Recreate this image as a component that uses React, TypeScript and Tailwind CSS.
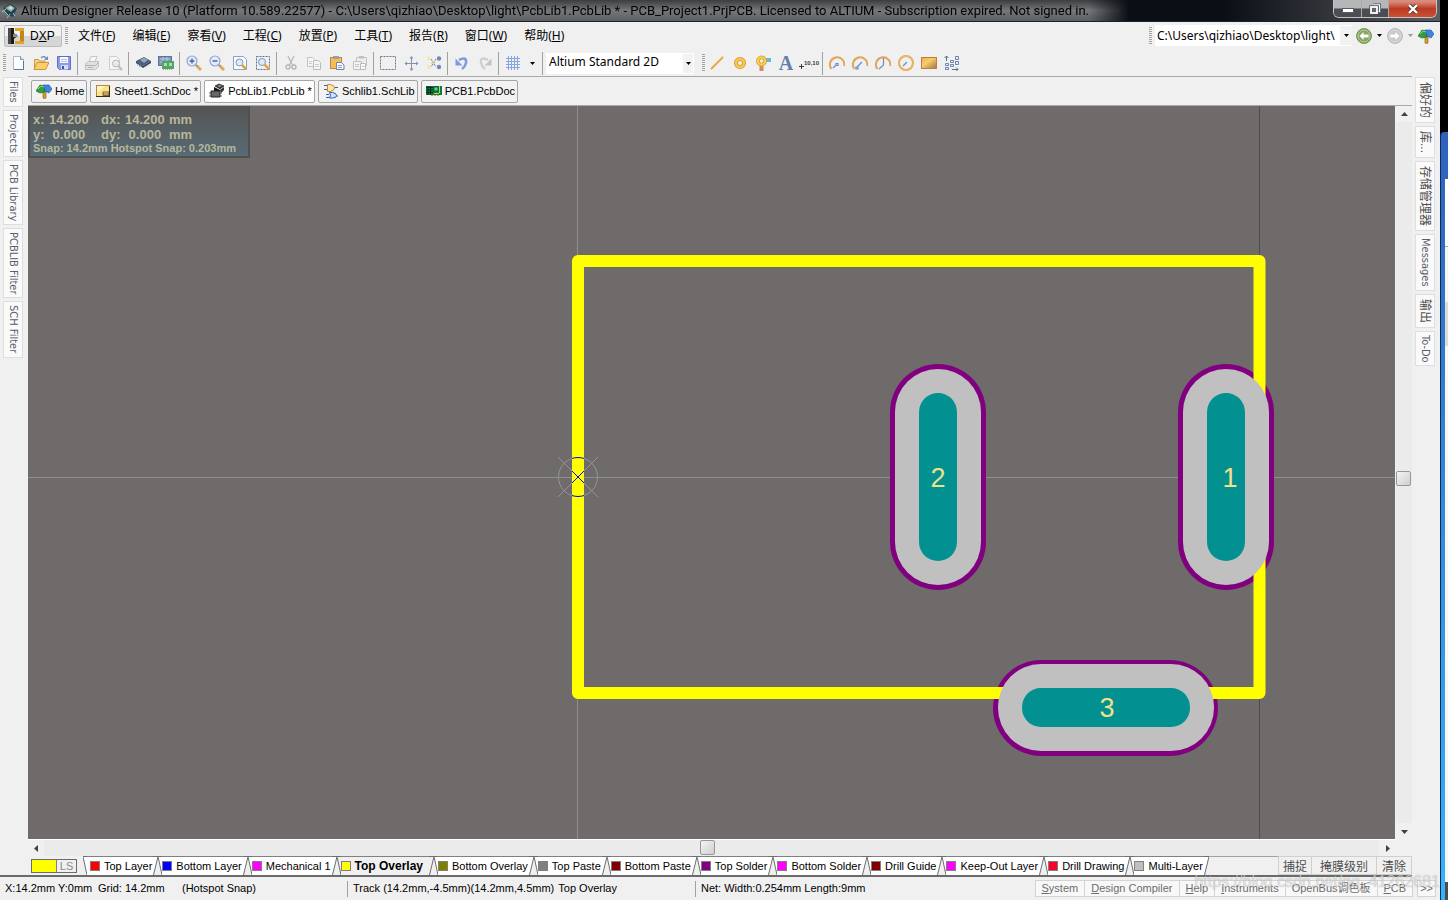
import { ReactNode } from "react";

const MENUS = [
  ["文件", "F"],
  ["编辑", "E"],
  ["察看", "V"],
  ["工程", "C"],
  ["放置", "P"],
  ["工具", "T"],
  ["报告", "R"],
  ["窗口", "W"],
  ["帮助", "H"],
];

const LAYERS = [
  { name: "Top Layer", color: "bg-[#ff0000]" },
  { name: "Bottom Layer", color: "bg-[#0000ff]" },
  { name: "Mechanical 1", color: "bg-[#ff00ff]" },
  { name: "Top Overlay", color: "bg-[#ffff00]", active: true },
  { name: "Bottom Overlay", color: "bg-[#808000]" },
  { name: "Top Paste", color: "bg-[#808080]" },
  { name: "Bottom Paste", color: "bg-[#800000]" },
  { name: "Top Solder", color: "bg-[#800080]" },
  { name: "Bottom Solder", color: "bg-[#ff00ff]" },
  { name: "Drill Guide", color: "bg-[#800000]" },
  { name: "Keep-Out Layer", color: "bg-[#ff00ff]" },
  { name: "Drill Drawing", color: "bg-[#ff002a]" },
  { name: "Multi-Layer", color: "bg-[#c0c0c0]" },
];

function Icon({ children }: { children: ReactNode }) {
  return (
    <svg width="16" height="16" viewBox="0 0 16 16" fill="none" className="shrink-0" aria-hidden="true">
      {children}
    </svg>
  );
}

/* ---------- icons ---------- */

const signpost = (
  <Icon>
    <path d="M7 5h3v10q-1.500 1-3 0z" fill="#d9a12c" stroke="#7a5510" strokeWidth=".6" />
    <path d="M0 8l4-6 5 1v6l-5 1z" fill="#2f9e3c" stroke="#17651f" strokeWidth=".6" />
    <path d="M7 2l6 0 3 4-3 4-4-2z" fill="#3c86dd" stroke="#174f99" strokeWidth=".6" />
    <path d="M2 6l3-3 3 1" stroke="#8edb84" />
  </Icon>
);

const sheetDoc = (
  <Icon>
    <rect x="1.500" y="2.500" width="13" height="11" fill="#fce08a" stroke="#b08a38" />
    <path d="M2 3h8L2 10z" fill="#fff4c8" />
    <path d="M8 12.500h6V9H8zM8 11h6" stroke="#5b4a20" strokeWidth=".8" />
    <path d="M1 13.500h14M14.500 3v11" stroke="#3d3010" />
  </Icon>
);

const chipDark = (
  <Icon>
    <path d="M6 3l4-2 5 2-4 3z" fill="#3a3a3a" stroke="#111" strokeWidth=".6" />
    <path d="M8 3l3-1 2 1-3 1z" fill="#999" />
    <path d="M5 4l6 3v5l-6-2z" fill="#151515" />
    <path d="M11 7l4-3v3l-3 3z" fill="#333" />
    <path d="M2 8h9v6H2z" fill="#666" stroke="#222" />
    <path d="M0 10h2M0 13h2M11 10h2M11 13h2" stroke="#555" />
  </Icon>
);

const gateDoc = (
  <Icon>
    <path d="M1 2.500h4M1 6.500h4M11 4.500h4" stroke="#2b62c0" />
    <path d="M4.500 1.500h3q4 1 4 3.500t-4 3.500h-3z" fill="#fbe6b0" stroke="#c98a17" />
    <path d="M3 11.500h3M3 14.500h3M12 13h3" stroke="#2b62c0" />
    <path d="M6.500 9.500h3q4 .5 4 3t-4 2.500h-3q2-3 0-5.500z" fill="#cfe3fb" stroke="#2b62c0" />
  </Icon>
);

const boardDoc = (
  <Icon>
    <path d="M0 3h16v9H0z" fill="#0f7a46" />
    <path d="M0 4.500h7M0 7h7M0 9.500h7M2 3v9M4.500 3v9" stroke="#0a2e1b" />
    <rect x="8" y="4" width="4" height="4" fill="#63d38a" stroke="#083d20" strokeWidth=".7" />
    <path d="M13.500 3v7M8 10.500h5" stroke="#a9e36a" />
    <path d="M5 12.500h8" stroke="#c9a63a" strokeDasharray="2 1" />
  </Icon>
);

const appLogo = (
  <Icon>
    <path d="M1 5l7-4 7 4-4 9-5-2z" fill="#24414e" />
    <path d="M3 5l5-3 5 3-4 4z" fill="#7fb0ba" />
    <path d="M6 5l3-2 2 2-2 2z" fill="#e8d9a0" />
    <path d="M2 8l4 4M4 6l-4 3M8 11l-3 4M11 10l2 3" stroke="#9ec1c9" />
  </Icon>
);

const dxpLogo = (
  <Icon>
    <path d="M0 0h6v5l4 3-4 3v5H0z" fill="#4b4b4b" />
    <path d="M3 0h3v16H3z" fill="#1b1b1b" />
    <path d="M7 0h9v16H7v-3h5V3H7z" fill="#e0a62b" />
    <path d="M12 3h4v10h-4z" fill="#c4841a" />
    <path d="M5 6h4v3H5z" fill="#8c8c8c" />
  </Icon>
);

const newDoc = (
  <Icon>
    <path d="M3.500 1.500h7l3 3v10h-10z" fill="#fdfeff" stroke="#a9b7cf" />
    <path d="M10.500 1.500v3h3" fill="#dfe9f7" stroke="#7f93b4" />
    <path d="M4 14.500h9.500V6" stroke="#5d749c" />
  </Icon>
);

const openFolder = (
  <Icon>
    <path d="M1.500 14V4.500h4l1 1.500H12v3" fill="#f6d584" stroke="#cf9a3a" />
    <path d="M1 14.500l3-7h12l-3.500 7z" fill="#fbcf6b" stroke="#cf9436" />
    <path d="M8 3q3-3 6 1" stroke="#6f8fbd" strokeWidth="1.300" />
    <path d="M15 1v4h-4z" fill="#6f8fbd" />
  </Icon>
);

const saveDisk = (
  <Icon>
    <path d="M1.500 1.500h13v13h-11l-2-2z" fill="#8c9ce6" stroke="#5f70c4" />
    <rect x="4" y="2" width="8" height="6" fill="#f7f9ff" />
    <path d="M5 4.500h6M5 6.500h6" stroke="#b9c3ea" />
    <rect x="5" y="10" width="7" height="4.500" fill="#d5dbf5" />
    <rect x="6" y="11" width="2" height="3" fill="#3f4f9c" />
  </Icon>
);

const printer = (
  <Icon>
    <path d="M5 7l2-5.500h6L11 7" fill="#f8f8f8" stroke="#c6c6c6" />
    <path d="M1.500 8.500l3-2h10v5l-3 3h-10z" fill="#e0e0e0" stroke="#c0c0c0" />
    <path d="M2 10.500h9.500l3-3M4 12.500h5" stroke="#b5b5b5" />
  </Icon>
);

const preview = (
  <Icon>
    <path d="M2.500 1.500h7l3 3v10h-10z" fill="#f6f6f6" stroke="#cdcdcd" />
    <circle cx="9" cy="8.500" r="3.500" fill="#e9e9e9" stroke="#b8b8b8" />
    <path d="M11.500 11l3.500 4" stroke="#bdbdbd" strokeWidth="2" />
  </Icon>
);

const chipBlue = (
  <Icon>
    <path d="M1 6l8-4 7 4-8 5z" fill="#4a5f7c" />
    <path d="M5 5l4-2.500 4 2.500-4 3z" fill="#93a7c1" />
    <path d="M1 6v2l7 5v-2zM8 11v2l8-5V6z" fill="#34445d" />
    <path d="M2 10.500l2-1.500M4 12l2-1.500M11 12.500l-1-1.500M14 10.500l-1-1.500" stroke="#93a7c1" />
  </Icon>
);

const boardGreen = (
  <Icon>
    <rect x=".5" y="1.500" width="13" height="9" fill="#7d93b5" stroke="#5f7499" />
    <path d="M2 4h10M2 7h10M5 2v8M9 2v8" stroke="#b9cbe2" />
    <rect x="4" y="6" width="12" height="8" fill="#4fa569" />
    <path d="M6 8h3v3H6zM11 8h3v3h-3z" fill="#a5dfae" />
    <path d="M5 14.500h10" stroke="#c8a443" strokeDasharray="1 1" />
  </Icon>
);

function Magnifier({ sign }: { sign: string }) {
  return (
    <Icon>
      <path d="M10.500 10.500l4.500 4.500" stroke="#e0aa5a" strokeWidth="3" />
      <path d="M9.500 9.500l2 2" stroke="#8a8f99" strokeWidth="1.500" />
      <circle cx="6" cy="6" r="5" fill="#e2ecfa" stroke="#93a8cc" strokeWidth="1.200" />
      <path d={sign} stroke="#4a69a5" strokeWidth="1.500" />
    </Icon>
  );
}

const zoomFit = (
  <Icon>
    <path d="M1.500 1.500h10l3 3v10h-13z" fill="#fafcff" stroke="#8ea1c4" />
    <circle cx="7.500" cy="7.500" r="3.500" fill="#dfe9f8" stroke="#7f95bb" />
    <path d="M10 10l4 4" stroke="#e3a548" strokeWidth="2.500" />
  </Icon>
);

const zoomArea = (
  <Icon>
    <rect x="1.500" y="1.500" width="13" height="13" stroke="#5d7194" strokeDasharray="2 1" />
    <circle cx="7" cy="7" r="3.500" fill="#dfe9f8" stroke="#7f95bb" />
    <path d="M9.500 9.500l5 5" stroke="#e3a548" strokeWidth="2.500" />
  </Icon>
);

const cut = (
  <Icon>
    <path d="M5 1l4.500 9M11 1l-4.500 9" stroke="#bdbdbd" strokeWidth="1.500" />
    <circle cx="5" cy="12" r="2" stroke="#b5b5b5" strokeWidth="1.400" />
    <circle cx="11" cy="12" r="2" stroke="#b5b5b5" strokeWidth="1.400" />
  </Icon>
);

const copy = (
  <Icon>
    <path d="M1.500 2.500h5l2 2v7h-7z" fill="#f5f5f5" stroke="#c4c4c4" />
    <path d="M7.500 5.500h5l2 2v7h-7z" fill="#f5f5f5" stroke="#bcbcbc" />
    <path d="M9 9.500h4M9 11.500h4M3 6.500h3M3 8.500h3" stroke="#cdcdcd" />
  </Icon>
);

const paste = (
  <Icon>
    <rect x="1.500" y="2.500" width="11" height="11" fill="#f2bd5a" stroke="#b98a3c" />
    <rect x="4" y="1" width="6" height="3" fill="#9aa0ab" />
    <path d="M7.500 7.500h5l2.500 2.500v4.500H7.500z" fill="#f6f9ff" stroke="#6e83a8" />
    <path d="M9 10.500h4M9 12.500h4" stroke="#8ca0c4" />
  </Icon>
);

const pasteSpecial = (
  <Icon>
    <path d="M4.500 2.500h10v8h-10z" fill="#ededed" stroke="#c4c4c4" />
    <rect x="7" y="1" width="5" height="2.500" fill="#bfbfbf" />
    <path d="M1.500 6.500h8v8h-8z" fill="#f3f3f3" stroke="#c0c0c0" />
    <path d="M8.500 8.500h5v6h-5z" fill="#fafafa" stroke="#bababa" />
    <path d="M3 9.500h4M3 11.500h4M10 11.500h3" stroke="#c8c8c8" />
  </Icon>
);

const marquee = (
  <Icon>
    <rect x=".5" y="1.500" width="15" height="13" stroke="#667893" strokeDasharray="2 1" />
  </Icon>
);

const move = (
  <Icon>
    <path d="M8.500 2v12M2 8.500h13" stroke="#8493ab" />
    <path d="M8.500 1l2 2.500h-4zM8.500 16l2-2.500h-4zM1.500 8.500l2.500-2v4zM15.500 8.500l-2.500-2v4z" fill="#8493ab" />
  </Icon>
);

const deselect = (
  <Icon>
    <path d="M5 4l5 8M10 4l-5 8" stroke="#65799c" strokeDasharray="2 1" />
    <circle cx="3" cy="3.500" r="2" fill="#f5e8a5" />
    <circle cx="3" cy="12" r="2" fill="#f5e8a5" />
    <circle cx="13" cy="3.500" r="2.200" fill="#7489b3" />
    <circle cx="13" cy="12" r="2.200" fill="#7489b3" />
    <path d="M5 8h4" stroke="#e2cf74" />
  </Icon>
);

const undo = (
  <Icon>
    <path d="M5 5q8-4 7 3-1 4-4 6" stroke="#7e9be0" strokeWidth="2.600" />
    <path d="M1.500 3.500v7h7z" fill="#7e9be0" />
  </Icon>
);

const redo = (
  <Icon>
    <path d="M11 5q-8-4-7 3 1 4 4 6" stroke="#cecece" strokeWidth="2.400" />
    <path d="M14.500 3.500v7h-7z" fill="#c4c4c4" />
  </Icon>
);

const grid = (
  <Icon>
    <path d="M1 3.500h14M1 6.500h14M1 9.500h14M1 12.500h14M3.500 1v14M6.500 1v14M9.500 1v14M12.500 1v14" stroke="#86a5e0" />
  </Icon>
);

const lineTool = (
  <Icon>
    <path d="M2 14L14 2" stroke="#dd9f35" strokeWidth="1.800" />
    <path d="M2 13.500L13.500 2" stroke="#f8cf72" strokeWidth=".7" />
  </Icon>
);

const padTool = (
  <Icon>
    <circle cx="8" cy="8" r="4" stroke="#d9992f" strokeWidth="4" />
    <circle cx="8" cy="8" r="4" stroke="#f7c64f" strokeWidth="2.400" />
  </Icon>
);

const viaTool = (
  <Icon>
    <path d="M9 3h7v4H9z" fill="#6bb9d8" />
    <path d="M4.500 9h4v7h-4z" fill="#d08e5d" />
    <circle cx="6.500" cy="6" r="3.600" stroke="#d9992f" strokeWidth="3.600" />
    <circle cx="6.500" cy="6" r="3.600" stroke="#f9cf4e" strokeWidth="2.200" />
  </Icon>
);

const textTool = (
  <svg width="23" height="20" viewBox="0 0 23 20" className="shrink-0" aria-hidden="true">
    <text x="12" y="17" textAnchor="middle" className="fill-[#647cae] font-['Liberation_Serif',serif] text-[20px] font-bold">
      A
    </text>
  </svg>
);

const coordTool = (
  <svg width="23" height="16" viewBox="0 0 23 16" className="shrink-0" aria-hidden="true">
    <path d="M2 11.500h5M4.500 9v5" stroke="#3c3c3c" />
    <text x="7" y="10" className="fill-[#3c3c3c] text-[6px] font-bold">
      10,10
    </text>
  </svg>
);

function ArcTool({ hand, full }: { hand: string; full?: boolean }) {
  return (
    <Icon>
      {full ? (
        <circle cx="8" cy="8" r="7" stroke="#e0a04a" strokeWidth="2" />
      ) : (
        <path d="M2.500 14A7.200 7.200 0 1 1 15.200 11" stroke="#e0a656" strokeWidth="2" />
      )}
      {full && <circle cx="8" cy="8" r="7" stroke="#f5cd80" strokeWidth=".7" />}
      <path d={hand} stroke="#6c8fca" strokeWidth="1.200" />
    </Icon>
  );
}

const fillTool = (
  <Icon>
    <defs>
      <linearGradient id="fill-gradient" x1="0" y1="0" x2="1" y2="1">
        <stop offset="0" stopColor="#e9a94a" />
        <stop offset=".4" stopColor="#f8cf6c" />
        <stop offset="1" stopColor="#a86f49" />
      </linearGradient>
    </defs>
    <rect x=".5" y="2.500" width="15" height="11" fill="url(#fill-gradient)" stroke="#b97f43" />
  </Icon>
);

const arrayTool = (
  <Icon>
    <path d="M2.500 1v5M.5 3l2-2 2 2M8 14.500h6M12 12.500l2 2-2 2" stroke="#5a6f94" />
    <path d="M1.500 8.500h3v2h-3zM1.500 12.500h3v2h-3zM6.500 5.500h3v2h-3zM6.500 9.500h3v2h-3zM11.500 1.500h3v3h-3zM11.500 6.500h3v3h-3z" stroke="#6a83b3" />
  </Icon>
);

function NavCircle({ back }: { back?: boolean }) {
  return (
    <Icon>
      <circle cx="8" cy="8" r="7.400" fill={back ? "#86a862" : "#c9c9c9"} stroke={back ? "#6f8f50" : "#b5b5b5"} />
      <circle cx="8" cy="8" r="6" stroke={back ? "#b4cc98" : "#dedede"} />
      <path d={back ? "M3.500 8l4-4v2.500h5v3h-5V12z" : "M12.500 8l-4-4v2.500h-5v3h5V12z"} fill="#fff" />
    </Icon>
  );
}

/* ---------- small pieces ---------- */

function Caret({ dim }: { dim?: boolean }) {
  return (
    <svg width="5" height="3" viewBox="0 0 5 3" className="shrink-0" aria-hidden="true">
      <path d="M0 0h5L2.500 3z" fill={dim ? "#999" : "#000"} />
    </svg>
  );
}

function Grip() {
  return (
    <svg width="3" height="18" viewBox="0 0 3 18" className="shrink-0" aria-hidden="true">
      <path d="M1.500 0v18" stroke="#a3a3a3" strokeWidth="3" strokeDasharray="1 1" />
    </svg>
  );
}

function Separator() {
  return (
    <div className="flex h-[23px] w-[5px] shrink-0 justify-center">
      <div className="w-px bg-[#a0a0a0]" />
    </div>
  );
}

function Tool({ label, children }: { label: string; children: ReactNode }) {
  return (
    <button type="button" aria-label={label} className="flex h-[23px] w-[23px] shrink-0 items-center justify-center">
      {children}
    </button>
  );
}

function DocTab({ label, icon, active }: { label: string; icon: ReactNode; active?: boolean }) {
  return (
    <button
      type="button"
      className={`flex h-[23px] items-center gap-[3px] rounded-xs border border-[#a5a5a5] pr-0.5 pl-1 text-[11px] whitespace-pre text-black ${
        active ? "bg-white" : "bg-[#f2f2f2]"
      }`}
    >
      {icon}
      {label}
    </button>
  );
}

function SideTab({ label, cjk }: { label: string; cjk?: boolean }) {
  return (
    <button
      type="button"
      className={`flex w-5 items-center justify-center border border-[#dedede] bg-[#fafafa] [text-orientation:sideways] [writing-mode:vertical-rl] ${
        cjk
          ? "pt-1 pb-1 text-[12px] leading-[12px] text-[#4f4f4f]"
          : "pt-[3px] pb-[3px] font-['DejaVu_Sans_Condensed','DejaVu_Sans',sans-serif] text-[11px] leading-[12px] text-[#5c5c6c]"
      }`}
    >
      {label}
    </button>
  );
}

function LayerTab({ name, color, active, first }: { name: string; color: string; active?: boolean; first?: boolean }) {
  const fill = active ? "#f0f0f0" : "#ffffff";
  return (
    <button type="button" className="flex h-[19px] items-stretch">
      <svg width="4" height="19" viewBox="0 0 4 19" className="shrink-0" aria-hidden="true">
        <path d="M0 .5L4 19V.5z" fill={fill} />
        <path d="M0 .5h4M0 .5L4 19" stroke="#6f6f6f" />
      </svg>
      <span
        className={`flex items-center gap-1 border-t border-[#808080] whitespace-nowrap text-black ${
          active ? "bg-[#f0f0f0] pr-1.5 text-[12px] font-bold" : "bg-white pr-px text-[11px]"
        } ${first ? "pl-[3px]" : ""}`}
      >
        <span className={`size-2.5 border border-[#808080] ${color}`} />
        {name}
      </span>
      <svg width="5" height="19" viewBox="0 0 5 19" className="shrink-0" aria-hidden="true">
        <path d="M0 .5h5L0 19z" fill={fill} />
        <path d="M0 .5h5L.5 19" stroke="#6f6f6f" fill="none" />
      </svg>
    </button>
  );
}

function PanelButton({ hot, label }: { hot?: string; label: string }) {
  return (
    <button type="button" className="border-r border-[#d4d4d4] px-1.5 whitespace-nowrap last:border-r-0">
      {hot && <span className="underline">{hot}</span>}
      {label}
    </button>
  );
}

/* ---------- board view ---------- */

function Pads() {
  return (
    <g>
      {/* solder mask rings sit under the overlay track */}
      <g fill="#800080">
        <rect x="862" y="258" width="96" height="226" rx="48" />
        <rect x="1150" y="258" width="96" height="226" rx="48" />
        <rect x="965" y="554" width="225" height="96" rx="48" />
      </g>
      <path d="M550 155H1231.500V587H550z" fill="none" stroke="#ffff00" strokeWidth="12" strokeLinejoin="round" />
      <g fill="#c0c0c0">
        <rect x="867" y="263" width="86" height="216" rx="43" />
        <rect x="1155" y="263" width="86" height="216" rx="43" />
        <rect x="970" y="558" width="216" height="87" rx="43" />
      </g>
      <g fill="#029190">
        <rect x="891" y="287" width="38" height="168" rx="19" />
        <rect x="1179" y="287" width="38" height="168" rx="19" />
        <rect x="994" y="582" width="168" height="39" rx="19" />
      </g>
      <g textAnchor="middle" className="fill-[#f0e08c] text-[27px]">
        <text x="910" y="381">2</text>
        <text x="1202" y="381">1</text>
        <text x="1079" y="611">3</text>
      </g>
    </g>
  );
}

function BoardView() {
  return (
    <div className="relative min-w-0 flex-1 overflow-hidden bg-[#6f6b6a]">
      <svg className="block size-full" aria-label="PcbLib1 footprint">
        <defs>
          <clipPath id="track-clip">
            <rect x="544" y="149" width="12" height="444" />
          </clipPath>
          <g id="origin-mark">
            <circle cx="550" cy="371" r="19.500" />
            <path d="M530 351l40 40M570 351l-40 40" />
          </g>
        </defs>
        <path d="M549.500 0V2000M0 371.500H4000" stroke="#8e8e8e" />
        <path d="M1231.500 0V2000" stroke="#504c56" />
        <Pads />
        <use href="#origin-mark" fill="none" stroke="#959595" />
        <g clipPath="url(#track-clip)">
          <rect x="544" y="340" width="12" height="62" fill="#ffff00" />
          <use href="#origin-mark" fill="none" stroke="#0000ff" />
        </g>
      </svg>
      <div className="absolute top-0 left-0 border-r-2 border-b-2 border-l-2 border-[#50504f] bg-linear-to-b from-[#555453] to-[#566b76] pt-1.5 pr-3 pb-px pl-[3px] font-bold whitespace-pre text-[#b7b79b]">
        <div className="grid grid-cols-[16px_52px_24px_44px_auto] text-[13px] leading-[15px]">
          <span>x:</span>
          <span>14.200</span>
          <span>dx:</span>
          <span>14.200</span>
          <span>mm</span>
          <span>y:</span>
          <span> 0.000</span>
          <span>dy:</span>
          <span> 0.000</span>
          <span>mm</span>
        </div>
        <p className="text-[11px] leading-[13px]">Snap: 14.2mm Hotspot Snap: 0.203mm</p>
      </div>
    </div>
  );
}

function ScrollThumb() {
  return <div className="size-[15px] rounded-xs border border-[#979797] bg-linear-to-br from-[#f4f4f4] to-[#cfcfcf]" />;
}

function ScrollArrow({ label, d }: { label: string; d: string }) {
  return (
    <button type="button" aria-label={label} className="flex size-4 shrink-0 items-center justify-center bg-[#f0f0f0]">
      <svg width="7" height="7" viewBox="0 0 7 7" aria-hidden="true">
        <path d={d} fill="#404040" />
      </svg>
    </button>
  );
}

/* ---------- window chrome ---------- */

function TitleBar() {
  return (
    <header className="flex h-[22px] shrink-0 items-start border-b border-[#1a2030] bg-[#0b0e15] bg-linear-to-r from-transparent from-85% to-[#5a5c5f]">
      <div className="flex h-[21px] min-w-0 items-center gap-[3px] bg-linear-to-b from-[#3b3d3f] via-[#75787a] to-[#5c5e60] pl-0.5 [mask-image:linear-gradient(to_right,#000_calc(100%-40px),transparent)]">
        {appLogo}
        <h1 className="truncate pr-10 font-[Roboto,'Noto_Sans_CJK_SC',sans-serif] text-[13px] leading-5 text-black">
          Altium Designer Release 10 (Platform 10.589.22577) - C:\Users\qizhiao\Desktop\light\PcbLib1.PcbLib * -
          PCB_Project1.PrjPCB. Licensed to ALTIUM - Subscription expired. Not signed in.
        </h1>
      </div>
      <div className="mr-[3px] ml-auto flex h-[18px] shrink-0 overflow-hidden rounded-b-md border border-t-0 border-[#c2c4c6]">
        <button type="button" aria-label="Minimize" className="flex w-7 items-center justify-center border-r border-[#a8aaac] bg-linear-to-b from-[#b4b6b8] from-45% to-[#4b4d50] to-55%">
          <svg width="12" height="5" viewBox="0 0 12 5" className="mt-1">
            <rect x=".5" y=".5" width="11" height="4" fill="#fff" stroke="#555b66" />
          </svg>
        </button>
        <button type="button" aria-label="Restore" className="flex w-[27px] items-center justify-center border-r border-[#a8aaac] bg-linear-to-b from-[#b4b6b8] from-45% to-[#4b4d50] to-55%">
          <svg width="12" height="12" viewBox="0 0 12 12">
            <path d="M4 2h6.500v6.500H9" fill="none" stroke="#4a505c" strokeWidth="3" />
            <path d="M4 2h6.500v6.500H9" fill="none" stroke="#fff" strokeWidth="1.400" />
            <rect x="2" y="4" width="6" height="6" fill="#777" stroke="#4a505c" strokeWidth="3.400" />
            <rect x="2" y="4" width="6" height="6" fill="#666" stroke="#fff" strokeWidth="1.800" />
          </svg>
        </button>
        <button type="button" aria-label="Close" className="flex w-[47px] items-center justify-center bg-linear-to-b from-[#d98a7a] from-10% via-[#bd3a22] via-50% to-[#c95136]">
          <svg width="12" height="10" viewBox="0 0 12 10">
            <path d="M2 1l8 8M10 1L2 9" stroke="#5c3232" strokeWidth="4" />
            <path d="M2 1l8 8M10 1L2 9" stroke="#fff" strokeWidth="2.400" />
          </svg>
        </button>
      </div>
    </header>
  );
}

function MenuBar() {
  return (
    <nav className="flex h-7 shrink-0 items-center pb-px pl-1">
      <button type="button" className="flex h-[22px] w-[58px] items-center gap-1.5 rounded-xs border border-[#bcbcbc] bg-linear-to-b from-[#f2f2f2] from-50% to-[#d6d6d6] to-50% pl-[3px] text-[12px]">
        {dxpLogo}
        <span>
          D<span className="underline">X</span>P
        </span>
      </button>
      <div className="mr-2.5 ml-[3px]">
        <Grip />
      </div>
      <div className="flex gap-[17px] font-['Noto_Sans','Noto_Sans_CJK_SC',sans-serif] text-[12px]">
        {MENUS.map(([name, key]) => (
          <button type="button" key={key} className="whitespace-nowrap">
            {name}(<span className="underline">{key}</span>)
          </button>
        ))}
      </div>
      <div className="mr-1 ml-auto flex items-center">
        <Grip />
        <div className="ml-[3px] flex h-[21px] w-[197px] items-stretch bg-white pl-0.5">
          <input
            aria-label="Document path"
            defaultValue="C:\Users\qizhiao\Desktop\light\PcbLib1.PcbLib"
            className="w-[178px] bg-transparent font-['Noto_Sans',sans-serif] text-[12px] outline-none"
          />
          <button type="button" aria-label="Recent paths" className="my-px ml-auto flex w-3 items-center justify-center bg-[#f2f2f2]">
            <Caret />
          </button>
        </div>
        <button type="button" aria-label="Back" className="ml-1">
          <NavCircle back />
        </button>
        <button type="button" aria-label="Back history" className="flex w-[15px] justify-center">
          <Caret />
        </button>
        <button type="button" aria-label="Forward">
          <NavCircle />
        </button>
        <button type="button" aria-label="Forward history" className="flex w-[15px] justify-center">
          <Caret dim />
        </button>
        <button type="button" aria-label="Home" className="mr-0.5">
          {signpost}
        </button>
      </div>
    </nav>
  );
}

function ToolBar() {
  return (
    <div className="flex h-[26px] shrink-0 items-center overflow-hidden pl-[3px]">
      <Grip />
      <Tool label="New">{newDoc}</Tool>
      <Tool label="Open">{openFolder}</Tool>
      <Tool label="Save">{saveDisk}</Tool>
      <Separator />
      <Tool label="Print">{printer}</Tool>
      <Tool label="Print preview">{preview}</Tool>
      <Separator />
      <Tool label="Devices">{chipBlue}</Tool>
      <Tool label="Board">{boardGreen}</Tool>
      <Separator />
      <Tool label="Zoom in">
        <Magnifier sign="M3.500 6h5M6 3.500v5" />
      </Tool>
      <Tool label="Zoom out">
        <Magnifier sign="M3.500 6h5" />
      </Tool>
      <Tool label="Fit document">{zoomFit}</Tool>
      <Tool label="Zoom area">{zoomArea}</Tool>
      <Separator />
      <Tool label="Cut">{cut}</Tool>
      <Tool label="Copy">{copy}</Tool>
      <Tool label="Paste">{paste}</Tool>
      <Tool label="Paste special">{pasteSpecial}</Tool>
      <Separator />
      <Tool label="Select area">{marquee}</Tool>
      <Tool label="Move">{move}</Tool>
      <Tool label="Deselect">{deselect}</Tool>
      <Separator />
      <Tool label="Undo">{undo}</Tool>
      <Tool label="Redo">{redo}</Tool>
      <Separator />
      <Tool label="Grid">{grid}</Tool>
      <button type="button" aria-label="Grid options" className="flex h-[23px] w-4 items-center justify-center">
        <Caret />
      </button>
      <Separator />
      <div className="relative mr-2 ml-px h-[21px] w-[148px] shrink-0 bg-white">
        <select
          aria-label="View configuration"
          className="block h-full w-full appearance-none bg-transparent pb-0.5 pl-[3px] font-['Noto_Sans',sans-serif] text-[12px] leading-[18px] outline-none"
        >
          <option>Altium Standard 2D</option>
        </select>
        <span className="pointer-events-none absolute inset-y-px right-px flex w-2.5 items-center justify-center bg-[#f2f2f2]">
          <Caret />
        </span>
      </div>
      <Grip />
      <Tool label="Place line">{lineTool}</Tool>
      <Tool label="Place pad">{padTool}</Tool>
      <Tool label="Place via">{viaTool}</Tool>
      <Tool label="Place string">{textTool}</Tool>
      <Tool label="Place coordinate">{coordTool}</Tool>
      <Separator />
      <Tool label="Arc by center">
        <ArcTool hand="M4 13l3-3M7 8.500h2v2H7z" />
      </Tool>
      <Tool label="Arc by edge">
        <ArcTool hand="M5 12l5-5M4 12h2v2H4z" />
      </Tool>
      <Tool label="Arc any angle">
        <ArcTool hand="M8.500 3v7L4 14" />
      </Tool>
      <Tool label="Full circle">
        <ArcTool hand="M5 11l4-4" full />
      </Tool>
      <Tool label="Place fill">{fillTool}</Tool>
      <Tool label="Paste array">{arrayTool}</Tool>
    </div>
  );
}

function LayerBar() {
  return (
    <div className="flex h-[19px] shrink-0 items-stretch pl-[3px]">
      <button type="button" className="mt-[3px] mr-1.5 flex h-[14px] w-[46px] shrink-0 border border-[#6b6b6b]">
        <span className="w-[25px] border-r border-[#808080] bg-[#ffff00]" />
        <span className="flex-1 text-center text-[11px] leading-[13px] text-[#8a8a8a]">LS</span>
      </button>
      <div className="flex min-w-0 flex-1 bg-[linear-gradient(#a0a0a0,#a0a0a0)] bg-[length:100%_1px] bg-no-repeat">
        {LAYERS.map((layer, i) => (
          <LayerTab key={layer.name} {...layer} first={i === 0} />
        ))}
      </div>
      <div className="flex shrink-0 border border-[#d0d0c8] font-['Noto_Sans_CJK_SC',sans-serif] text-[12px] leading-[17px] text-[#4f4f4f]">
        <button type="button" className="border-r border-[#d0d0c8] px-1">
          捕捉
        </button>
        <button type="button" className="border-r border-[#d0d0c8] px-2">
          掩膜级别
        </button>
        <button type="button" className="px-[5px]">
          清除
        </button>
      </div>
    </div>
  );
}

function StatusBar() {
  return (
    <footer className="shrink-0">
      <div className="mr-7 h-0.5 bg-[#6a6a6a]" />
      <div className="flex h-[23px] items-center pr-1 text-[11px] whitespace-pre text-black">
        <div className="flex h-4 w-[348px] items-center border-r border-[#a0a0a0] pl-[5px]">
          <span className="w-[93px]">X:14.2mm Y:0mm</span>
          <span className="w-[84px]">Grid: 14.2mm</span>
          <span>(Hotspot Snap)</span>
        </div>
        <div className="flex h-4 w-[348px] items-center gap-1 border-r border-[#a0a0a0] pl-[5px]">
          <span>Track (14.2mm,-4.5mm)(14.2mm,4.5mm)</span>
          <span>Top Overlay</span>
        </div>
        <span className="pl-[5px]">Net: Width:0.254mm Length:9mm</span>
        <div className="ml-auto flex h-[17px] border border-[#d4d4d4] bg-[#f8f8f8] leading-[15px] text-[#6c6c6c]">
          <PanelButton hot="S" label="ystem" />
          <PanelButton hot="D" label="esign Compiler" />
          <PanelButton hot="H" label="elp" />
          <PanelButton hot="I" label="nstruments" />
          <PanelButton label="OpenBus调色板" />
          <PanelButton hot="P" label="CB" />
        </div>
        <button type="button" className="ml-1 h-[17px] border border-[#d4d4d4] bg-[#f8f8f8] px-0.5 leading-[15px] text-[#6c6c6c]">
          &gt;&gt;
        </button>
      </div>
    </footer>
  );
}

export default function App() {
  return (
    <div className="relative flex h-screen overflow-hidden bg-black font-['Liberation_Sans','Noto_Sans_CJK_SC',sans-serif]">
      <main className="flex min-w-0 flex-1 flex-col bg-[#f0f0f0]">
        <TitleBar />
        <MenuBar />
        <ToolBar />
        <div className="flex min-h-0 flex-1">
          <nav className="flex w-7 shrink-0 flex-col gap-[3px] pt-px pl-[3px]">
            <SideTab label="Files" />
            <SideTab label="Projects" />
            <SideTab label="PCB Library" />
            <SideTab label="PCBLIB Filter" />
            <SideTab label="SCH Filter" />
          </nav>
          <div className="flex min-w-0 flex-1 flex-col">
            <div className="flex h-[30px] shrink-0 items-center gap-[3px] border-y border-[#a8a8a8] pl-[3px]">
              <DocTab label="Home" icon={signpost} />
              <DocTab label="Sheet1.SchDoc *" icon={sheetDoc} />
              <DocTab label="PcbLib1.PcbLib *" icon={chipDark} active />
              <DocTab label="Schlib1.SchLib" icon={gateDoc} />
              <DocTab label="PCB1.PcbDoc" icon={boardDoc} />
            </div>
            <div className="flex min-h-0 flex-1">
              <BoardView />
              <div className="ml-px flex w-4 shrink-0 flex-col bg-[#ebebeb]">
                <ScrollArrow label="Scroll up" d="M0 5h7L3.500 1z" />
                <div className="flex flex-1 items-center justify-start pt-3">
                  <ScrollThumb />
                </div>
                <ScrollArrow label="Scroll down" d="M0 2h7L3.500 6z" />
              </div>
            </div>
            <div className="mr-[17px] flex h-[17px] shrink-0 border-t border-white bg-[#ebebeb]">
              <ScrollArrow label="Scroll left" d="M5 0v7L1 3.500z" />
              <div className="flex flex-1 items-start justify-center pr-2">
                <ScrollThumb />
              </div>
              <ScrollArrow label="Scroll right" d="M2 0v7l4-3.500z" />
            </div>
            <LayerBar />
          </div>
          <nav className="flex w-7 shrink-0 flex-col gap-[3px] pt-px pl-[3px]">
            <SideTab label="偏好的" cjk />
            <SideTab label="库..." cjk />
            <SideTab label="存储管理器" cjk />
            <SideTab label="Messages" />
            <SideTab label="输出" cjk />
            <SideTab label="To-Do" />
          </nav>
        </div>
        <StatusBar />
      </main>
      {/* the window behind, showing past the right edge */}
      <aside className="flex w-2 shrink-0 flex-col">
        <div className="h-[132px] shrink-0" />
        <div className="flex flex-1 rounded-tl-sm border-l border-[#0a2a6a] bg-linear-to-b from-[#2f62b8] to-[#35b4f5]">
          <div className="w-1" />
          <div className="mt-[47px] flex flex-1 flex-col bg-white">
            <div className="h-[68px] border-b border-[#a8a8a8]" />
            <div className="h-[55px] bg-[#f5f5f5]" />
            <div className="h-11 bg-[#dcdcdc]" />
            <div className="flex-1 bg-[#f7f7f7]" />
            <div className="h-[18px] bg-[#4c4c4c]" />
          </div>
        </div>
      </aside>
      <p className="pointer-events-none absolute right-2 bottom-2 text-[16px] leading-5 text-white/60 [text-shadow:0_0_1px_rgb(0_0_0/0.35)]">
        https://blog.csdn.net/qq_41262681
      </p>
    </div>
  );
}
